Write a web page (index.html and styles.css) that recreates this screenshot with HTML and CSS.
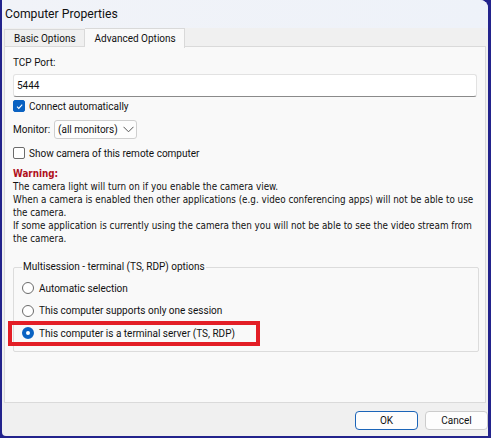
FILE: index.html
```html
<!DOCTYPE html>
<html>
<head>
<meta charset="utf-8">
<link rel="stylesheet" href="styles.css">
</head>
<body>
<div class="window">
  <div class="titlebar">Computer Properties</div>
  <div class="tabs">
    <div class="tab">Basic Options</div>
    <div class="tab active">Advanced Options</div>
  </div>
  <div class="panel">
    <div class="label first">TCP Port:</div>
    <div class="input">5444</div>
    <div class="check-row row-connect">
      <span class="checkbox checked">
        <svg width="9" height="9" viewBox="0 0 9 9"><path d="M2 4.6 L3.8 6.4 L7.2 2.6" fill="none" stroke="#fff" stroke-width="1.1"/></svg>
      </span>
      <span>Connect automatically</span>
    </div>
    <div class="monitor-row">
      <span>Monitor:</span>
      <div class="select">
        <span>(all monitors)</span>
        <svg width="11" height="7" viewBox="0 0 11 7"><path d="M0.5 0.8 L5.5 5.8 L10.5 0.8" fill="none" stroke="#555" stroke-width="1"/></svg>
      </div>
    </div>
    <div class="check-row row-camera">
      <span class="checkbox"></span>
      <span>Show camera of this remote computer</span>
    </div>
    <div class="warning">
      <div class="warn-title">Warning:</div>
      <div>The camera light will turn on if you enable the camera view.</div>
      <div>When a camera is enabled then other applications (e.g. video conferencing apps) will not be able to use<br>the camera.</div>
      <div>If some application is currently using the camera then you will not be able to see the video stream from<br>the camera.</div>
    </div>
    <fieldset class="group">
      <legend>Multisession - terminal (TS, RDP) options</legend>
      <div class="radio-row"><span class="radio"></span><span>Automatic selection</span></div>
      <div class="radio-row"><span class="radio"></span><span>This computer supports only one session</span></div>
      <div class="radio-row"><span class="radio on"></span><span>This computer is a terminal server (TS, RDP)</span></div>
    </fieldset>
    <div class="highlight"></div>
  </div>
  <div class="footer">
    <div class="btn default">OK</div>
    <div class="btn">Cancel</div>
  </div>
</div>
</body>
</html>
```
FILE: styles.css
```css
html, body {
  margin: 0;
  padding: 0;
}
body {
  width: 491px;
  height: 438px;
  overflow: hidden;
  background: #23238c;
  font-family: Roboto, "Liberation Sans", sans-serif;
  font-size: 10px;
  color: #111;
}
.window {
  margin-left: 2px;
  width: 486px;
  height: 436px;
  background: #f0f0f0;
  border-top-right-radius: 8px;
  border-bottom-left-radius: 4px;
  display: flex;
  flex-direction: column;
  overflow: hidden;
}
.titlebar {
  height: 28px;
  line-height: 28px;
  padding-left: 3px;
  font-size: 12.2px;
  color: #111;
  background: linear-gradient(90deg, #f1f3f8, #eef2f9);
}
.tabs {
  display: flex;
  padding-left: 2px;
  height: 18px;
}
.tab {
  height: 17px;
  line-height: 17px;
  padding: 0 8px 0 9px;
  border: 1px solid #d9d9d9;
  border-bottom: none;
  margin-top: 1px;
  background: #f0f0f0;
  white-space: nowrap;
}
.tab.active {
  background: #f9f9f9;
  margin-top: 0;
  height: 19px;
  line-height: 19px;
  padding: 0 8px 0 10px;
  border-left: none;
  position: relative;
  z-index: 1;
}
.panel {
  position: relative;
  margin: 0 0 0 2px;
  background: #f9f9f9;
  border: 1px solid #dadada;
  padding-left: 8px;
  box-sizing: border-box;
  width: 482px;
  height: 357px;
}
.label.first {
  margin-top: 8px;
  height: 16px;
  line-height: 16px;
}
.input {
  margin-top: 3px;
  width: 464px;
  height: 23px;
  box-sizing: border-box;
  background: #fff;
  border: 1px solid #e2e2e2;
  border-bottom: 1px solid #8a8a8a;
  border-radius: 3px;
  padding-left: 3px;
  line-height: 21px;
}
.check-row {
  display: flex;
  align-items: center;
  gap: 4px;
  height: 14px;
  white-space: nowrap;
}
.row-connect { margin-top: 2px; }
.row-camera { margin-top: 7px; }
.checkbox {
  width: 10px;
  height: 10px;
  border: 1px solid #6b6b6b;
  border-radius: 2px;
  box-sizing: content-box;
  background: #fff;
  display: flex;
  align-items: center;
  justify-content: center;
}
.checkbox.checked {
  background: #0a62c2;
  border-color: #0a62c2;
}
.monitor-row {
  margin-top: 7px;
  display: flex;
  align-items: center;
  gap: 4px;
  white-space: nowrap;
}
.select {
  width: 83px;
  height: 19px;
  box-sizing: border-box;
  border: 1px solid #cfcfcf;
  border-radius: 3px;
  background: #fdfdfd;
  display: flex;
  align-items: center;
  justify-content: space-between;
  padding: 0 2px 0 3px;
}
.warning {
  margin-top: 7px;
  font-family: "DejaVu Sans Condensed", "DejaVu Sans", sans-serif;
  font-stretch: condensed;
  font-size: 9.8px;
  line-height: 13px;
  color: #111;
  white-space: nowrap;
}
.warn-title {
  color: #b0101c;
  font-weight: bold;
}
.group {
  margin: 15px 0 0 0;
  width: 466px;
  height: 92px;
  box-sizing: border-box;
  border: 1px solid #dcdcdc;
  border-radius: 2px;
  padding: 7px 0 0 8px;
}
.group legend {
  padding: 0 1px;
  margin-left: 0;
  line-height: 14px;
}
.radio-row {
  display: flex;
  align-items: center;
  gap: 5px;
  height: 14px;
  margin-bottom: 8.5px;
  white-space: nowrap;
}
.radio {
  width: 10px;
  height: 10px;
  border: 1px solid #6b6b6b;
  border-radius: 50%;
  background: #fff;
  box-sizing: content-box;
}
.radio.on {
  border: 4px solid #0a62c2;
  width: 4px;
  height: 4px;
  background: #fff;
}
.highlight {
  position: absolute;
  left: 3px;
  top: 274px;
  width: 252px;
  height: 25px;
  border: 4px solid #e31e26;
  box-sizing: border-box;
}
.footer {
  display: flex;
  justify-content: flex-end;
  gap: 7px;
  margin-top: 8px;
}
.btn {
  width: 63px;
  height: 19px;
  box-sizing: border-box;
  border: 1px solid #cccccc;
  border-radius: 4px;
  background: #fdfdfd;
  text-align: center;
  line-height: 17px;
}
.btn.default {
  border-color: #1b64b8;
}
```
